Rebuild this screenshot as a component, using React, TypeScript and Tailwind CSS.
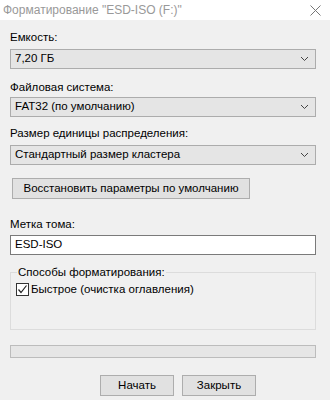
import React from "react";

const FONT = "font-['Liberation_Sans',Arial,sans-serif]";

function Chevron() {
  return (
    <svg width="9" height="6" viewBox="0 0 9 6" className="shrink-0">
      <path d="M1 1 L4.5 4.5 L8 1" fill="none" stroke="#444" strokeWidth="1" />
    </svg>
  );
}

function Select({ value }: { value: string }) {
  return (
    <div className="flex h-[20px] w-[306px] items-center justify-between border border-[#acacac] bg-[#e5e5e5] pl-[4px] pr-[6px]">
      <span className="text-[11.5px] leading-none text-black">{value}</span>
      <Chevron />
    </div>
  );
}

function Label({ children, className = "" }: { children: React.ReactNode; className?: string }) {
  return <div className={`h-[16px] text-[11.5px] leading-[16px] text-black ${className}`}>{children}</div>;
}

function Button({ children, className = "" }: { children: React.ReactNode; className?: string }) {
  return (
    <div
      className={`flex h-[21px] items-center justify-center whitespace-nowrap border border-[#adadad] bg-[#e1e1e1] text-[11.5px] leading-none text-black ${className}`}
    >
      {children}
    </div>
  );
}

export default function App() {
  return (
    <div className={`h-[400px] w-[330px] overflow-hidden bg-[#f0f0f0] ${FONT}`}>
      {/* Заголовок окна */}
      <div className="flex h-[20px] items-center justify-between bg-white pl-[3px] pr-[9px]">
        <span className="text-[12px] leading-none text-[#999]">Форматирование "ESD-ISO (F:)"</span>
        <svg width="11" height="11" viewBox="0 0 11 11">
          <path d="M0.5 0.5 L10.5 10.5 M10.5 0.5 L0.5 10.5" stroke="#777" strokeWidth="1" />
        </svg>
      </div>

      <div className="px-[10px]">
        <Label className="mt-[9px]">Емкость:</Label>
        <div className="mt-[4px]">
          <Select value="7,20 ГБ" />
        </div>

        <Label className="mt-[10px]">Файловая система:</Label>
        <div className="mt-[2px]">
          <Select value="FAT32 (по умолчанию)" />
        </div>

        <Label className="mt-[8px]">Размер единицы распределения:</Label>
        <div className="mt-[4px]">
          <Select value="Стандартный размер кластера" />
        </div>

        <Button className="ml-[2px] mt-[13px] w-[238px]">Восстановить параметры по умолчанию</Button>

        <Label className="mt-[17px]">Метка тома:</Label>
        <div className="mt-[3px] flex h-[20px] w-[306px] items-center border border-[#7a7a7a] bg-white pl-[4px] text-[11.5px] leading-none text-black">
          ESD-ISO
        </div>

        {/* Способы форматирования */}
        <fieldset className="mt-[9px] h-[66px] w-[306px] border border-[#dcdcdc] px-[5px]">
          <legend className="ml-[1px] px-[1px] text-[11.5px] leading-[16px] text-black">Способы форматирования:</legend>
          <div className="mt-[1px] flex items-center gap-[2px]">
            <div className="flex h-[13px] w-[13px] items-center justify-center border border-[#333] bg-white">
              <svg width="11" height="11" viewBox="0 0 11 11">
                <path d="M1.5 5.5 L4 8.5 L9.5 1.5" fill="none" stroke="#222" strokeWidth="1.2" />
              </svg>
            </div>
            <span className="text-[11.5px] leading-[16px] text-black">Быстрое (очистка оглавления)</span>
          </div>
        </fieldset>

        {/* Прогресс */}
        <div className="mt-[15px] h-[13px] w-[306px] border border-[#bcbcbc] bg-[#e6e6e6]" />

        <div className="ml-[90px] mt-[17px] flex gap-[8px]">
          <Button className="w-[74px]">Начать</Button>
          <Button className="w-[74px]">Закрыть</Button>
        </div>
      </div>
    </div>
  );
}
